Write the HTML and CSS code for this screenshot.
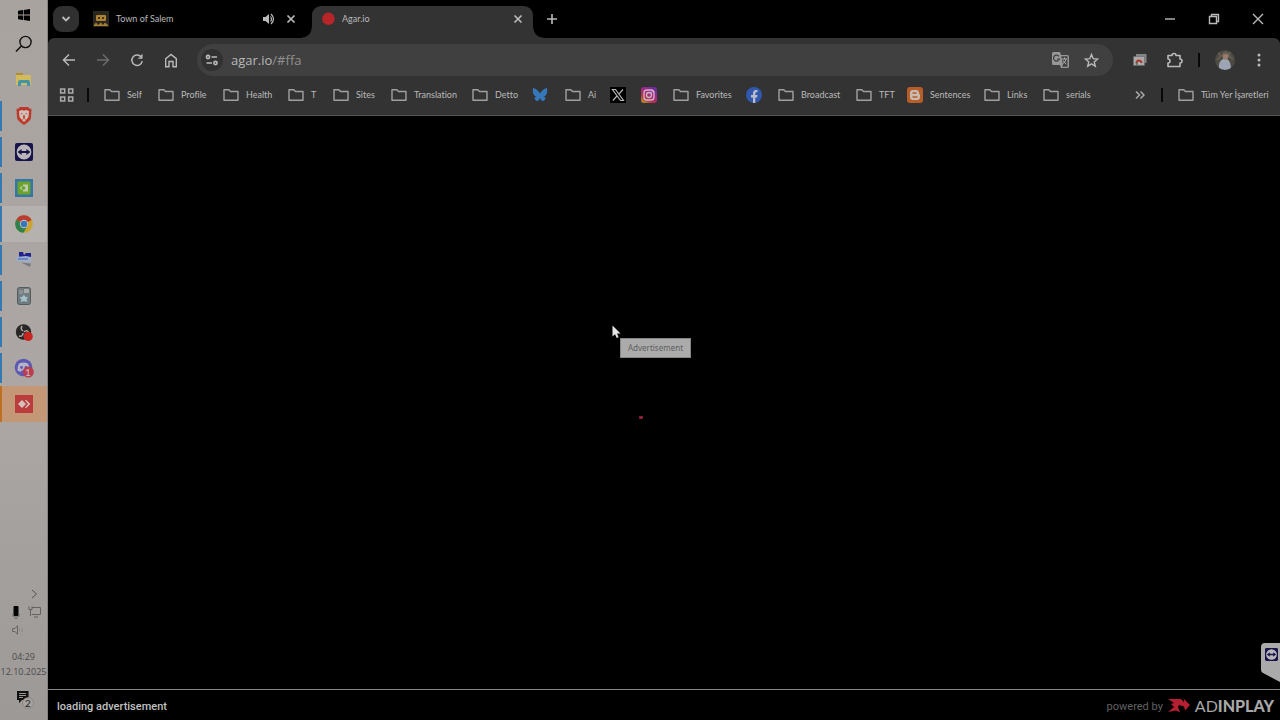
FILE: index.html
```html
<!DOCTYPE html>
<html lang="tr">
<head>
<meta charset="utf-8">
<title>Agar.io</title>
<link rel="stylesheet" href="styles.css">
</head>
<body>
<svg class="defs" aria-hidden="true">
  <symbol id="folder" viewBox="0 0 16 16"><path d="M1 2.700h4.800l1.700 1.800h7.500v8.800H1z" fill="none" stroke="#a0a0a0" stroke-width="1.400" stroke-linejoin="round"/></symbol>
  <symbol id="close" viewBox="0 0 10 10"><path d="M1.500 1.500l7 7M8.500 1.500l-7 7" stroke="currentColor" stroke-width="1.700"/></symbol>
  <symbol id="teamviewer" viewBox="0 0 18 18"><rect width="18" height="18" rx="2" fill="#17134a"/><circle cx="9" cy="9" r="7.400" fill="#b9b6b9"/><path d="M2.600 9l4-3v2h4.800V6l4 3-4 3v-2H6.600v2z" fill="#17134a"/></symbol>
</svg>
<div class="desktop">
  <aside class="taskbar">
    <nav class="apps" aria-label="Taskbar">
      <button class="app start" aria-label="Start"><svg width="12" height="12" viewBox="0 0 12 12"><path d="M0 1.800l5-.7v4.500H0zM5.700 1L12 0v5.600H5.700zM0 6.400h5v4.500l-5-.7zM5.700 6.400H12V12l-6.300-1z"/></svg></button>
      <button class="app" aria-label="Search"><svg width="18" height="18" viewBox="0 0 18 18"><circle cx="10.500" cy="7" r="5.600" fill="none" stroke="#111" stroke-width="1.400"/><path d="M6.400 11L1 16.500" stroke="#111" stroke-width="1.500"/></svg></button>
      <button class="app" aria-label="Explorer"><svg width="18" height="16" viewBox="0 0 18 16"><path d="M1 1h7v3H1z" fill="#b38c2f"/><path d="M1 3h15v10H1z" fill="#d2bb5c"/><path d="M3 14v-4q0-2 2-2h8q2 0 2 2v4h-3v-3H6v3z" fill="#4294a6"/></svg></button>
      <button class="app open" aria-label="Brave"><svg width="16" height="18" viewBox="0 0 16 18"><path d="M4 0h8l1.500 1.500 2 .5-.5 9q-.5 3-7 7Q1.500 14 1 11L.5 2l2-.5z" fill="#bd392b"/><path d="M3 4l3-1 2 .7L10 3l3 1-.5 6L10 13l-2 2-2-2-2.500-3z" fill="#d1c0b9"/><path d="M4.500 6l2.500.7-1 .8zM11.500 6L9 6.700l1 .8zM7.500 8h1l.5 2.500-1 .7-1-.7z" fill="#b93528"/><path d="M6 12.500l2-1 2 1" fill="none" stroke="#b93528" stroke-width=".6"/></svg></button>
      <button class="app open" aria-label="TeamViewer"><svg width="18" height="18"><use href="#teamviewer"/></svg></button>
      <button class="app open" aria-label="NVIDIA"><svg width="18" height="18" viewBox="0 0 18 18"><path d="M0 0h18v18H0z" fill="#3676a7"/><path d="M2.500 2.500h13v13h-13z" fill="#69a52b"/><path d="M8 5.500h5v7H8z" fill="#c0c9ac"/><path d="M4.500 9q3.500-4 7 0-3.500 4-7 0z" fill="#b5c99a"/><circle cx="8.500" cy="9" r="1.700" fill="#64a329"/></svg></button>
      <button class="app open current" aria-label="Chrome"><svg width="18" height="18" viewBox="0 0 18 18"><circle cx="9" cy="9" r="8.700" fill="#c9a52f"/><path d="M9 9L1.300 4.700A8.700 8.700 0 0 1 16.600 5z" fill="#ba3d32"/><path d="M9 9L1.300 4.700A8.700 8.700 0 0 0 8.500 17.700L12.500 11z" fill="#30824a"/><circle cx="9" cy="9" r="4.200" fill="#c5c0bc"/><circle cx="9" cy="9" r="3.200" fill="#3775bd"/></svg></button>
      <button class="app open" aria-label="Remote desktop"><svg width="18" height="18" viewBox="0 0 18 18"><path d="M4 1h4l1 3 2-2h5v6H4z" fill="#20218c"/><path d="M1 6l10-1 5 1v5l-14-1z" fill="#9baed0"/><path d="M3 8h10" stroke="#5f79b6" stroke-width="1.500"/><path d="M6 11.500l10 1-1 3.500z" fill="#777b83"/></svg></button>
      <button class="app open" aria-label="Game library"><svg width="14" height="18" viewBox="0 0 14 18"><rect x=".5" y=".5" width="13" height="17" rx="2" fill="#747b7d" stroke="#555b5d"/><path d="M7 2h5v4H7z" fill="#a8aaa9"/><path d="M2 4h4M2 6h4" stroke="#a0a3a3"/><path d="M7 7l1.500 2.500 3 .3-1.500 2.700.7 3L7 14.500l-3.500 1 .5-3L2 10l3.200-.5z" fill="#a9bfc9" stroke="#527381" stroke-width=".6"/></svg></button>
      <button class="app open" aria-label="OBS Studio"><svg width="18" height="18" viewBox="0 0 18 18"><circle cx="8.500" cy="9" r="7.700" fill="#282626"/><path d="M8 8Q5 6 7 3M9 9q3-3 5 1M8 10q0 4-4 3" fill="none" stroke="#aaa5a2" stroke-width="1.500"/><circle cx="13.200" cy="13.400" r="4.600" fill="#c72620"/></svg></button>
      <button class="app open" aria-label="Discord, 1"><svg width="20" height="20" viewBox="0 0 20 20"><circle cx="9.500" cy="9.500" r="8.800" fill="#5c58b2"/><path d="M5 5.500q4.500-2 9 0 2 4 1.500 7l-3 1.500-1-1.500h-4l-1 1.500-3-1.500q-.5-3 1.500-7z" fill="#b7b3c7"/><circle cx="7.500" cy="9.500" r="1.400" fill="#5c58b2"/><circle cx="12" cy="9.500" r="1.400" fill="#5c58b2"/><circle cx="14.300" cy="14" r="5.500" fill="#b73e50"/></svg><span class="app-badge">1</span></button>
      <button class="app alert" aria-label="AnyDesk"><svg width="18" height="18" viewBox="0 0 18 18"><path d="M0 0h18v18H0z" fill="#bb3c3d"/><path d="M7 5l4 4-4 4-4-4z" fill="#d6c0b9"/><path d="M10 5.500L11 4.700 15.300 9 11 13.300l-1-.8L13 9z" fill="#d6c0b9"/></svg></button>
    </nav>
    <div class="tray">
      <div class="tray-row end"><svg width="7" height="10" viewBox="0 0 7 10"><path d="M1 1l4.500 4L1 9" fill="none" stroke="#555" /></svg></div>
      <div class="tray-row"><svg width="8" height="13" viewBox="0 0 8 13"><rect x="1.500" width="5" height="10" rx="1" fill="#050505"/><path d="M0 8q0 3 4 3t4-3M4 11v2M2.500 12.500h3" fill="none" stroke="#777"/></svg><svg width="13" height="12" viewBox="0 0 13 12"><path d="M4 1.500h8.500v7H4M1 .5v3h3v-3M2.500 3.500V10M6 11h4" fill="none" stroke="#626262"/></svg></div>
      <div class="tray-row"><svg width="12" height="10" viewBox="0 0 12 10"><path d="M.5 3.500H3L5.500.7v8.600L3 6.500H.5z" fill="none" stroke="#696765"/><path d="M7.500 3.500v3M10 3v4" stroke="#8b8886"/></svg></div>
      <div class="clock"><time>04:29</time><span>12.10.2025</span></div>
      <button class="notices" aria-label="Notifications"><svg width="20" height="20" viewBox="0 0 20 20"><path d="M3 1h11.500v9H8l-3 3v-3H3z" fill="#111"/><path d="M5 3.500h7M5 5.500h7M5 7.500h4" stroke="#aaa6a3" stroke-width=".9"/><circle cx="14" cy="13" r="5.500" fill="#a6a29f" stroke="#817e7b" stroke-width=".7"/></svg><span class="notice-count">2</span></button>
    </div>
  </aside>

  <section class="browser">
    <header class="tabs">
      <button class="tab-search" aria-label="Search tabs"><svg width="10" height="8" viewBox="0 0 10 8"><path d="M1.500 2L5 5.500 8.500 2" fill="none" stroke="currentColor" stroke-width="1.800"/></svg></button>
      <div class="tab">
        <svg width="16" height="16" viewBox="0 0 16 16"><path d="M0 0h16v16H0z" fill="#292720"/><rect x="3" y="4" width="10" height="6" rx="1" fill="#ad8334"/><path d="M5 6h2v2H5zM9 6h2v2H9z" fill="#4b3618"/><path d="M1 14l2-2.500L5 14l3-2.500 2 2.500 2-2.500 3 2.500v1H1z" fill="#a77b30"/></svg>
        <span class="tab-title">Town of Salem</span>
        <svg width="13" height="12" viewBox="0 0 13 12"><path d="M1 4h2.500L7 1v10L3.500 8H1z" fill="currentColor"/><path d="M8.500 3.500q2 2.500 0 5M9 1q5 5 0 10" fill="none" stroke="currentColor" stroke-width="1.200"/></svg>
        <button class="tab-close" aria-label="Close tab"><svg width="10" height="10"><use href="#close"/></svg></button>
      </div>
      <div class="tab active">
        <svg width="14" height="14" viewBox="0 0 14 14"><path d="M7 .3l1.500.6 1.700-.1 1 1.400 1.600.8.2 1.700.8 1.500-.5 1.500.2 1.700-1.400 1-.8 1.600-1.700.2-1.600 1-1.600-.6-1.700.1-1-1.300-1.700-.8-.1-1.800-.9-1.600.6-1.500-.1-1.700 1.400-1L3.600 1.400l1.700-.2z" fill="#b82528"/></svg>
        <span class="tab-title">Agar.io</span>
        <button class="tab-close" aria-label="Close tab"><svg width="10" height="10"><use href="#close"/></svg></button>
      </div>
      <button class="new-tab" aria-label="New tab"><svg width="12" height="12" viewBox="0 0 12 12"><path d="M6 1v10M1 6h10" stroke="currentColor" stroke-width="1.600"/></svg></button>
      <div class="window-controls">
        <button aria-label="Minimize"><svg width="12" height="12" viewBox="0 0 12 12"><path d="M1 6h10" stroke="currentColor" stroke-width="1.400"/></svg></button>
        <button aria-label="Restore"><svg width="12" height="12" viewBox="0 0 12 12"><path d="M1.500 3.500h7v7h-7zM3.500 3V1.500h7v7H9" fill="none" stroke="currentColor" stroke-width="1.400"/></svg></button>
        <button aria-label="Close"><svg width="12" height="12" viewBox="0 0 12 12"><path d="M1 1l10 10M11 1L1 11" stroke="currentColor" stroke-width="1.400"/></svg></button>
      </div>
    </header>

    <div class="toolbar">
      <button aria-label="Back"><svg width="14" height="14" viewBox="0 0 14 14"><path d="M13 7H2M7 1.500L1.500 7 7 12.500" fill="none" stroke="currentColor" stroke-width="1.500"/></svg></button>
      <button class="dim" aria-label="Forward"><svg width="14" height="14" viewBox="0 0 14 14"><path d="M1 7h11M7 1.500L12.500 7 7 12.500" fill="none" stroke="currentColor" stroke-width="1.500"/></svg></button>
      <button aria-label="Reload"><svg width="14" height="14" viewBox="0 0 14 14"><path d="M11.500 4.500A5.200 5.200 0 1 0 12.200 8" fill="none" stroke="currentColor" stroke-width="1.500"/><path d="M12.500.8v5H7.700L9 4.400h2V2z" fill="currentColor"/></svg></button>
      <button aria-label="Home"><svg width="14" height="15" viewBox="0 0 14 15"><path d="M1.700 5.700L7 1.500l5.300 4.200v8H9V8.500H5v5.200H1.700z" fill="none" stroke="currentColor" stroke-width="1.400"/></svg></button>
      <div class="address">
        <button class="site-info" aria-label="Site information"><svg width="14" height="12" viewBox="0 0 14 12"><g fill="none" stroke="currentColor" stroke-width="1.600"><circle cx="3" cy="3" r="1.600"/><path d="M6.500 3H12M1.500 9H7"/><circle cx="10.500" cy="9" r="1.600"/></g></svg></button>
        <div class="url" role="textbox" aria-label="Address" tabindex="0">agar.io<span class="url-path">/#ffa</span></div>
        <button aria-label="Translate page"><svg width="17" height="16" viewBox="0 0 17 16"><path d="M1.500 0H8l1 3h6.500Q17 3 17 4.500v10q0 1.500-1.500 1.500H9l-1-3H1.500Q0 13 0 11.500v-10Q0 0 1.500 0z" fill="#979797"/><path d="M9.300 4.300h6.200v10.400H10l1-2z" fill="#424242"/><path d="M10 7h5M12.500 5.500V7M14 7.500q-.5 2.500-3 4M11.300 8.500q.7 2 3 3.500" fill="none" stroke="#b0b0b0"/><path d="M7 4.300a3 3 0 1 0 .4 2.700H5" fill="none" stroke="#414141" stroke-width="1.200"/></svg></button>
        <button aria-label="Bookmark page"><svg width="15" height="15" viewBox="0 0 15 15"><path d="M7.500 1.500l1.700 4.200 4.500.3-3.500 2.900 1.100 4.400-3.800-2.400-3.800 2.400 1.100-4.400L1.300 6l4.500-.3z" fill="none" stroke="currentColor" stroke-width="1.400"/></svg></button>
      </div>
      <div class="extensions">
        <button class="extension" aria-label="Extension"><svg width="14" height="14" viewBox="0 0 14 14"><path d="M3 1h10.500v9H3z" fill="#858585"/><path d="M.5 3.500h11v9H.5z" fill="#aaa" stroke="#686868" stroke-width=".6"/><path d="M2.500 10a3.500 3.500 0 0 1 7 0z" fill="#aa3b36"/><path d="M2.500 10h3L4.500 12H3.500z" fill="#477f4d"/><circle cx="6" cy="10" r="1.300" fill="#b4b4b4"/></svg></button>
        <button aria-label="Extensions"><svg width="17" height="17" viewBox="0 0 17 17"><path d="M2 3.500h4a2 2 0 0 1 4 0h4v3.500a2 2 0 0 1 0 4v3.500H2v-3.500a2 2 0 0 0 0-4z" fill="none" stroke="currentColor" stroke-width="1.600" stroke-linejoin="round"/></svg></button>
        <span class="divider"></span>
        <button aria-label="Profile"><svg width="20" height="20" viewBox="0 0 20 20"><clipPath id="face"><circle cx="10" cy="10" r="10"/></clipPath><g clip-path="url(#face)"><path d="M0 0h20v20H0z" fill="#4d4a42"/><path d="M3 2l3 4-4 4M15 2l-1 4 4 3" fill="none" stroke="#676358" stroke-width="1.500"/><path d="M4 20q-1-9 4-11h4q4 2 4 11z" fill="#9da5b4"/><ellipse cx="10.500" cy="5.800" rx="3" ry="4" fill="#9a7b6b"/><path d="M7.500 5q.5-4 3.500-3.500T13.500 5q-3-2-6 0z" fill="#656057"/></g></svg></button>
        <button class="menu" aria-label="Menu"><svg width="4" height="14" viewBox="0 0 4 14" fill="currentColor"><circle cx="2" cy="2" r="1.500"/><circle cx="2" cy="7" r="1.500"/><circle cx="2" cy="12" r="1.500"/></svg></button>
      </div>
    </div>

    <nav class="bookmarks" aria-label="Bookmarks">
      <button class="bookmark" aria-label="Apps"><svg width="16" height="16" viewBox="0 0 16 16"><path d="M1.700 2h4v4h-4zM9.700 2h4v4h-4zM1.700 10h4v4h-4zM9.700 10h4v4h-4z" fill="none" stroke="#aaa" stroke-width="1.600"/></svg></button>
      <span class="divider"></span>
      <button class="bookmark"><svg width="16" height="16"><use href="#folder"/></svg>Self</button>
      <button class="bookmark"><svg width="16" height="16"><use href="#folder"/></svg>Profile</button>
      <button class="bookmark"><svg width="16" height="16"><use href="#folder"/></svg>Health</button>
      <button class="bookmark"><svg width="16" height="16"><use href="#folder"/></svg>T</button>
      <button class="bookmark"><svg width="16" height="16"><use href="#folder"/></svg>Sites</button>
      <button class="bookmark"><svg width="16" height="16"><use href="#folder"/></svg>Translation</button>
      <button class="bookmark"><svg width="16" height="16"><use href="#folder"/></svg>Detto</button>
      <a class="bookmark" href="#" aria-label="Bluesky"><svg width="16" height="16" viewBox="0 0 16 16"><path d="M8 6.500Q5 1.500 1 1q-.8 5 1.200 7.500Q3.500 9.500 5 9q-3.500 1-2 3.500Q6 16.500 8 11q2 5.500 5 1.500Q14.500 10 11 9q1.500.5 2.800-.5Q15.800 6 15 1q-4 .5-7 5.500z" fill="#3577b9"/></svg></a>
      <button class="bookmark"><svg width="16" height="16"><use href="#folder"/></svg>Ai</button>
      <a class="bookmark" href="#" aria-label="X"><svg width="16" height="16" viewBox="0 0 16 16"><path d="M0 0h16v16H0z"/><path d="M2.500 2.500h3l8 11h-3zM13 2.500L8.800 7.200M7 9l-4.200 4.500" fill="none" stroke="#b5b5b5" stroke-width="1.200"/></svg></a>
      <a class="bookmark" href="#" aria-label="Instagram"><svg width="16" height="16" viewBox="0 0 16 16"><defs><linearGradient id="insta" x1="0" y1="1" x2=".7" y2="0"><stop stop-color="#c2a12c"/><stop offset=".35" stop-color="#b13549"/><stop offset=".65" stop-color="#a52984"/><stop offset="1" stop-color="#6e2c9b"/></linearGradient></defs><rect width="16" height="16" rx="3" fill="url(#insta)"/><g fill="none" stroke="#d1b8ca" stroke-width="1.300"><rect x="3" y="3" width="10" height="10" rx="3"/><circle cx="8" cy="8" r="2.500"/></g><circle cx="11" cy="5" r=".7" fill="#d1b8ca"/></svg></a>
      <button class="bookmark"><svg width="16" height="16"><use href="#folder"/></svg>Favorites</button>
      <a class="bookmark" href="#" aria-label="Facebook"><svg width="16" height="16" viewBox="0 0 16 16"><circle cx="8" cy="8" r="8" fill="#3158ad"/><path d="M7 16v-5.500H5V8h2V6.500Q7 3 10 3h1.500v2.200H10.300Q9.300 5.200 9.300 6.500V8h2.200l-.4 2.500H9.300V16z" fill="#b9bdca"/></svg></a>
      <button class="bookmark"><svg width="16" height="16"><use href="#folder"/></svg>Broadcast</button>
      <button class="bookmark"><svg width="16" height="16"><use href="#folder"/></svg>TFT</button>
      <a class="bookmark" href="#"><svg width="16" height="16" viewBox="0 0 16 16"><rect width="16" height="16" rx="3" fill="#b75d28"/><path d="M6 3h3q3 0 3 3 0 1.500 1 1.500V10q0 3-3 3H6q-3 0-3-3V6q0-3 3-3z" fill="#c9bbb1"/><path d="M6 6h3M6 10h4" stroke="#b75d28" stroke-width="1.400" stroke-linecap="round"/></svg>Sentences</a>
      <button class="bookmark"><svg width="16" height="16"><use href="#folder"/></svg>Links</button>
      <button class="bookmark"><svg width="16" height="16"><use href="#folder"/></svg>serials</button>
      <button class="bookmark more" aria-label="More bookmarks"><svg width="10" height="10" viewBox="0 0 10 10"><path d="M1 1.500L4.500 5 1 8.500M5.500 1.500L9 5 5.500 8.500" fill="none" stroke="#aaa" stroke-width="1.500"/></svg></button>
      <span class="divider"></span>
      <button class="bookmark"><svg width="16" height="16"><use href="#folder"/></svg>Tüm Yer İşaretleri</button>
    </nav>

    <main class="page">
      <svg class="cursor" width="9" height="14" viewBox="0 0 9 14"><path d="M.5.5v11L3 9.200 4.800 13l1.800-.8L5 8.500h3.500z" fill="#e4e4e4"/></svg>
      <div class="tooltip" role="tooltip">Advertisement</div>
      <span class="loader"></span>
      <button class="remote-tab" aria-label="TeamViewer panel"><svg width="19" height="40" viewBox="0 0 19 40"><path d="M4 0h15v39L2 30q-2-1-2-3V4q0-4 4-4z" fill="#aaa"/><svg x="4" y="5" width="13" height="13"><use href="#teamviewer"/></svg></svg></button>
    </main>
    <footer class="ad-bar">
      <span class="ad-status">loading advertisement</span>
      <a class="ad-brand" href="#"><span class="powered">powered by</span><svg width="22" height="14" viewBox="0 0 22 14"><path d="M0 0h13l3 3v-3l6 6-5 5.500-1-4-5-1.500-1 2 2 5.500-4-2-8 1.500 6-5-3-3 3-1z" fill="#b51f32"/></svg><span class="brand-name">AD<b>INPLAY</b></span></a>
    </footer>
  </section>
</div>
</body>
</html>
```
FILE: styles.css
```css
* { box-sizing: border-box; }
body { margin: 0; background: #000; color: #bababa; font-family: "Lato", sans-serif; font-size: 9px; font-variant-ligatures: none; }
button { border: 0; padding: 0; background: none; color: inherit; font: inherit; }
a { color: inherit; text-decoration: none; }
svg { display: block; flex: none; }
.defs { position: absolute; width: 0; height: 0; }
.desktop { display: grid; grid-template-columns: 48px minmax(0, 1fr); min-height: 100vh; }

.taskbar { display: flex; flex-direction: column; justify-content: space-between; background: linear-gradient(#a8a39f, #aca7a4 55%, #9c9997); border-right: 1px solid #858381; }
.apps { display: flex; flex-direction: column; }
.app { position: relative; display: flex; align-items: center; justify-content: center; height: 36px; }
.app.start { height: 26px; padding-top: 4px; }
.app.open::before, .app.alert::before { content: ""; position: absolute; left: 0; top: 3px; bottom: 3px; width: 2px; background: #3479b2; }
.app.current { background: #b5b1ae; }
.app.current::before { top: 0; bottom: 0; }
.app.alert { background: #c49776; }
.app.alert::before { top: 0; bottom: 0; background: #bd7024; }
.app-badge { position: absolute; left: 25px; top: 16px; color: #d3bdc1; font-size: 10px; line-height: 12px; }
.tray { display: flex; flex-direction: column; color: #4c4a49; padding-bottom: 10px; }
.tray-row { display: flex; align-items: center; justify-content: space-between; height: 18px; padding: 0 6px 0 12px; }
.tray-row.end { justify-content: flex-end; padding-right: 9px; }
.clock { display: flex; flex-direction: column; align-items: center; padding-top: 10px; font-family: "Open Sans", sans-serif; font-size: 9px; line-height: 15px; white-space: nowrap; }
.notices { position: relative; display: flex; justify-content: center; padding-top: 11px; }
.notice-count { position: absolute; left: 25px; top: 18px; color: #222; font-size: 10px; line-height: 12px; }

.browser { display: flex; flex-direction: column; min-width: 0; }
.tabs { display: flex; align-items: center; height: 38px; padding-left: 5px; background: #000; }
.tab-search { display: flex; align-items: center; justify-content: center; width: 26px; height: 26px; border-radius: 9px; background: #303030; }
.tab { display: flex; align-items: center; gap: 7px; width: 233px; height: 32px; padding: 0 16px 0 14px; }
.tab-title { flex: 1; line-height: 12px; padding-bottom: 1px; }
.tab-close { margin-left: 4px; }
.tab.active { position: relative; align-self: flex-end; width: 221px; padding: 0 10px 6px 9px; border-radius: 9px 9px 0 0; background: #333; }
.tab.active::before, .tab.active::after { content: ""; position: absolute; bottom: 0; width: 10px; height: 10px; }
.tab.active::before { right: 100%; background: radial-gradient(circle at 0 0, transparent 9px, #333 10px); }
.tab.active::after { left: 100%; background: radial-gradient(circle at 100% 0, transparent 9px, #333 10px); }
.new-tab { padding: 0 13px; }
.window-controls { display: flex; gap: 32px; margin-left: auto; padding-right: 16px; }

.toolbar { display: flex; align-items: center; gap: 20px; height: 44px; padding: 0 19px 0 14px; border-radius: 6px 6px 0 0; background: #333; }
.dim { color: #6c6c6c; }
.address { display: flex; align-items: center; flex: 1; gap: 15px; height: 32px; padding: 0 14px 0 4px; margin-left: -1px; border-radius: 16px; background: #404040; }
.site-info { display: flex; align-items: center; justify-content: center; width: 22px; height: 22px; border-radius: 50%; background: #313131; }
.url { flex: 1; margin-left: -7px; color: #b8b8b8; font-family: "Open Sans", sans-serif; font-size: 13px; line-height: 18px; }
.url-path { color: #909090; }
.extensions { display: flex; align-items: center; gap: 15px; }
.extension { padding-right: 4px; }
.menu { padding-left: 7px; }
.divider { width: 2px; height: 14px; background: #080808; }

.bookmarks { display: grid; grid-template-columns: 28px 17px 54px 65px 65px 45px 58px 81px 60px 33px 45px 31px 32px 73px 32px 78px 51px 77px 59px 60px minmax(40px, 1fr) 17px 89px; align-items: center; height: 34px; padding: 0 13px 7px 11px; background: #333; border-bottom: 1px solid #555; }
.bookmark { display: flex; align-items: center; gap: 7px; line-height: 12px; white-space: nowrap; }
.more { justify-content: flex-end; padding-right: 16px; }

.page { position: relative; flex: 1; min-height: 300px; background: #000; }
.cursor { position: absolute; left: 564px; top: 209px; }
.tooltip { position: absolute; left: 572px; top: 222px; padding: 2px 7px; border: 1px solid #858585; background: #ababab; color: #606060; font-family: "Noto Sans", sans-serif; font-size: 8px; line-height: 14px; }
.loader { position: absolute; left: 591px; top: 300px; width: 4px; height: 3px; border-radius: 1px; background: #8b2232; }
.remote-tab { position: absolute; right: 0; bottom: 6px; }
.ad-bar { display: flex; align-items: center; justify-content: space-between; height: 31px; padding: 2px 6px 0 9px; border-top: 1px solid #858585; background: #000; }
.ad-status { color: #c0c0c0; font-family: "Roboto", sans-serif; font-size: 11px; font-weight: 500; }
.ad-brand { display: flex; align-items: center; gap: 5px; }
.powered { color: #606060; font-family: "Roboto", sans-serif; font-size: 11px; }
.brand-name { color: #a8a8a8; font-size: 16px; line-height: 20px; }
.brand-name b { font-weight: 900; }
```
